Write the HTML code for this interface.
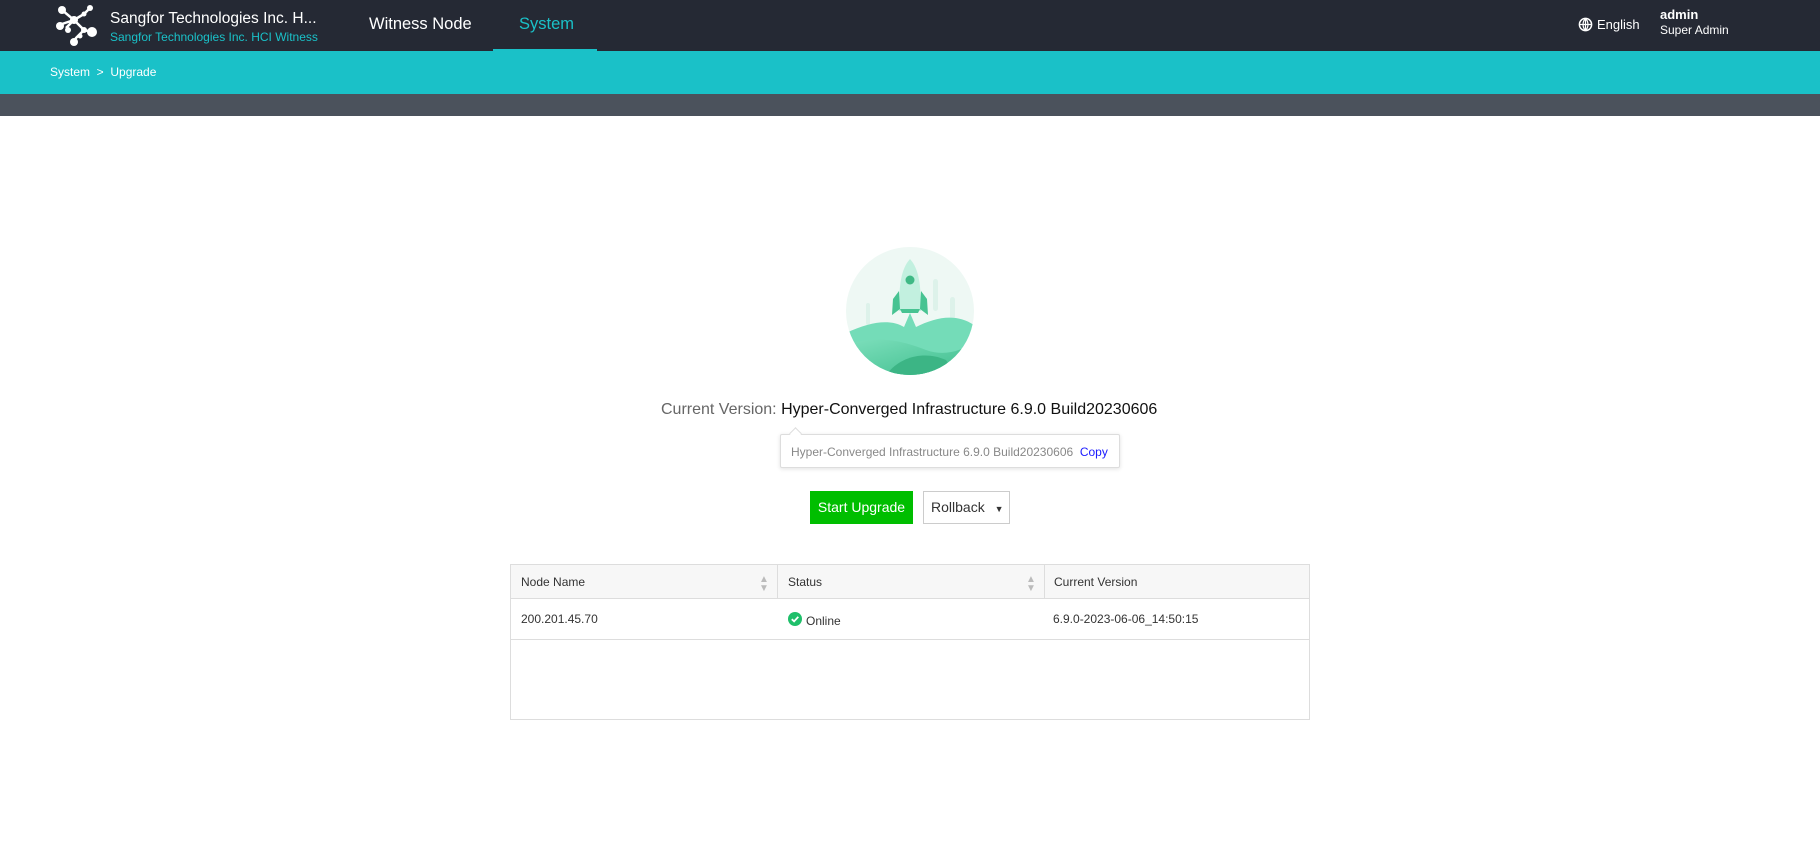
<!DOCTYPE html>
<html><head><meta charset="utf-8"><style>
*{margin:0;padding:0;box-sizing:border-box}
body{width:1820px;height:851px;background:#fff;font-family:"Liberation Sans",Arial,sans-serif;position:relative;overflow:hidden}
.abs{position:absolute}
.hdr{left:0;top:0;width:1820px;height:51px;background:#252934}
.crumb{left:0;top:51px;width:1820px;height:43px;background:#1ac1c8}
.band{left:0;top:94px;width:1820px;height:22px;background:#4b525c}
</style></head><body>
<div class="abs hdr"></div>
<svg class="abs" style="left:54px;top:4px" width="46" height="42" viewBox="0 0 46 42">
<g stroke="#fff" stroke-width="2.5" fill="none"><path d="M8 6 L20 16 L30 26 L38 28 M20 16 L30 10 L36 4 M20 16 L12 24 M30 26 L22 34 L20 38 M8 20 L20 16"/></g>
<g fill="#fff"><circle cx="8" cy="6" r="4"/><circle cx="20" cy="16" r="4"/><circle cx="36" cy="4" r="3"/><circle cx="30" cy="10" r="2.5"/><circle cx="38" cy="28" r="5"/><circle cx="30" cy="26" r="3"/><circle cx="6" cy="22" r="4"/><circle cx="14" cy="26" r="3"/><circle cx="20" cy="38" r="4"/><circle cx="26" cy="32" r="2.5"/></g></svg>
<div class="abs" style="left:110px;top:10px;color:#fff;font-size:15.5px">Sangfor Technologies Inc. H...</div>
<div class="abs" style="left:110px;top:30px;color:#1ac1c8;font-size:12px">Sangfor Technologies Inc. HCI Witness</div>
<div class="abs" style="left:369px;top:15px;color:#fff;font-size:16.5px">Witness Node</div>
<div class="abs" style="left:519px;top:15px;color:#1ac1c8;font-size:16.5px">System</div>
<div class="abs" style="left:493px;top:49px;width:104px;height:3px;background:#1ac1c8"></div>
<svg class="abs" style="left:1578px;top:17px" width="15" height="15" viewBox="0 0 16 16"><circle cx="8" cy="8" r="6.5" fill="none" stroke="#fff" stroke-width="1.6"/><path d="M1.5 8H14.5M8 1.5V14.5M8 1.5C4.5 5 4.5 11 8 14.5M8 1.5C11.5 5 11.5 11 8 14.5" stroke="#fff" stroke-width="1.3" fill="none"/></svg>
<div class="abs" style="left:1597px;top:17px;color:#fff;font-size:13px">English</div>
<div class="abs" style="left:1660px;top:7px;color:#fff;font-size:13px;font-weight:bold">admin</div>
<div class="abs" style="left:1660px;top:23px;color:#fff;font-size:12px">Super Admin</div>
<div class="abs crumb"></div>
<div class="abs" style="left:50px;top:65px;color:#fff;font-size:12px">System &nbsp;&gt;&nbsp; Upgrade</div>
<div class="abs band"></div>
<svg class="abs" style="left:846px;top:247px" width="128" height="128" viewBox="0 0 128 128">
<defs><clipPath id="c"><circle cx="64" cy="64" r="64"/></clipPath>
<linearGradient id="g1" x1="0" y1="0" x2="1" y2="1"><stop offset="0" stop-color="#7ddfbc"/><stop offset="1" stop-color="#3dbd8c"/></linearGradient></defs>
<circle cx="64" cy="64" r="64" fill="#eef8f4"/>
<g clip-path="url(#c)">
<rect x="20" y="56" width="4" height="22" rx="2" fill="#ddf2ea"/><rect x="87" y="32" width="5" height="32" rx="2.5" fill="#ddf2ea"/><rect x="104" y="50" width="5" height="22" rx="2.5" fill="#ddf2ea"/>
<path d="M0 86 C25 74 45 72 58 80 L64 66 L70 80 C90 70 110 66 128 78 V128 H0Z" fill="#74dcb8"/>
<path d="M0 98 C30 88 55 93 80 103 C100 110 115 103 128 96 V128 H0Z" fill="url(#g1)"/>
<path d="M40 128 C55 108 80 104 100 113 L110 128Z" fill="#3cb585"/>
</g>
<path d="M64 12 C55 22 53 38 53 64 L75 64 C75 38 73 22 64 12Z" fill="#c2f0df"/>
<path d="M53 44 L47 52 L46 68 L54 62Z M75 44 L81 52 L82 68 L74 62Z" fill="#47c392"/>
<path d="M54 62 H74 L72 66 H56Z" fill="#47c392"/>
<circle cx="64" cy="33" r="4.5" fill="#3fb985"/>
</svg>
<div class="abs" style="left:661px;top:401px;font-size:16px;color:#666;white-space:nowrap">Current Version: <span style="color:#111">Hyper-Converged Infrastructure 6.9.0 Build20230606</span></div>
<div class="abs" style="left:780px;top:434px;width:340px;height:34px;border:1px solid #ddd;border-radius:2px;box-shadow:0 1px 4px rgba(0,0,0,.12);background:#fff;font-size:12px;color:#888;padding:10px 0 0 10px;white-space:nowrap">Hyper-Converged Infrastructure 6.9.0 Build20230606 &nbsp;<span style="color:#1a1aff">Copy</span></div>
<div class="abs" style="left:791px;top:429px;width:9px;height:9px;background:#fff;border-left:1px solid #ddd;border-top:1px solid #ddd;transform:rotate(45deg)"></div>
<div class="abs" style="left:810px;top:491px;width:103px;height:33px;background:#00be00;color:#fff;font-size:14px;text-align:center;line-height:33px">Start Upgrade</div>
<div class="abs" style="left:923px;top:491px;width:87px;height:33px;border:1px solid #ccc;color:#333;font-size:14px;line-height:31px;padding-left:7px">Rollback <span style="font-size:9px;margin-left:6px">▼</span></div>
<div class="abs" style="left:510px;top:564px;width:800px;height:156px;border:1px solid #ddd"></div>
<div class="abs" style="left:511px;top:565px;width:798px;height:34px;background:#f7f7f7;border-bottom:1px solid #ddd"></div>
<div class="abs" style="left:777px;top:565px;width:1px;height:34px;background:#ddd"></div>
<div class="abs" style="left:1044px;top:565px;width:1px;height:34px;background:#ddd"></div>
<div class="abs" style="left:511px;top:639px;width:798px;height:1px;background:#ddd"></div>
<div class="abs" style="left:521px;top:575px;font-size:12px;color:#333">Node Name</div>
<div class="abs" style="left:788px;top:575px;font-size:12px;color:#333">Status</div>
<div class="abs" style="left:1054px;top:575px;font-size:12px;color:#333">Current Version</div>
<div class="abs" style="left:759px;top:575px;font-size:10px;color:#bbb;line-height:9px">▲<br>▼</div>
<div class="abs" style="left:1026px;top:575px;font-size:10px;color:#bbb;line-height:9px">▲<br>▼</div>
<div class="abs" style="left:521px;top:612px;font-size:12px;color:#333">200.201.45.70</div>
<svg class="abs" style="left:788px;top:612px" width="14" height="14" viewBox="0 0 14 14"><circle cx="7" cy="7" r="7" fill="#1fbf6a"/><path d="M3.8 7.2 L6.1 9.4 L10.3 4.8" stroke="#fff" stroke-width="1.8" fill="none"/></svg>
<div class="abs" style="left:806px;top:614px;font-size:12px;color:#333">Online</div>
<div class="abs" style="left:1053px;top:612px;font-size:12px;color:#333">6.9.0-2023-06-06_14:50:15</div>
</body></html>
